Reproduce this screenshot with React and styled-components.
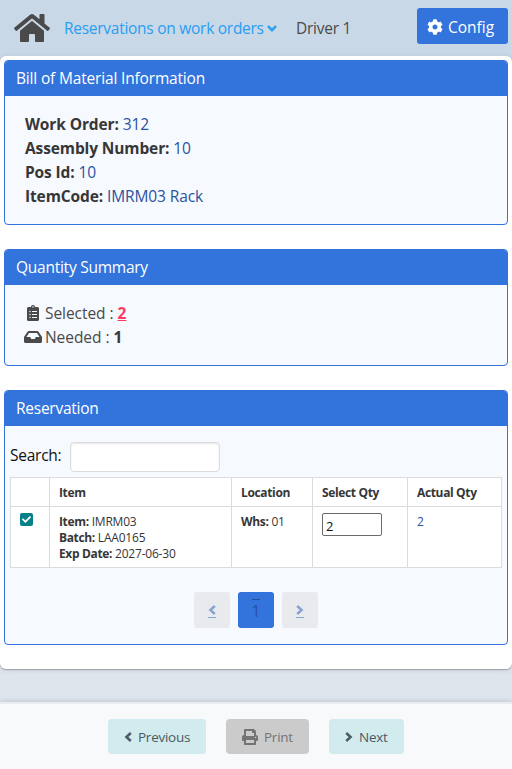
import React from "react";
import styled, { createGlobalStyle } from "styled-components";
import {
  FaHome,
  FaCog,
  FaClipboardList,
  FaInbox,
  FaPrint,
  FaCheck,
} from "react-icons/fa";

const GlobalStyle = createGlobalStyle`
  *, *::before, *::after { box-sizing: border-box; }
  body {
    margin: 0;
    background: #dee5ed;
    color: #4a4a4a;
    font-family: "Open Sans", "Noto Sans", sans-serif;
    font-size: 15.5px;
    line-height: 24px;
    overflow: hidden;
  }
  svg { display: block; flex: none; }
`;

const Page = styled.div`
  display: flex;
  flex-direction: column;
  width: 512px;
  height: 769px;
  background: linear-gradient(#c9d8e6 0 640px, #dee5ed 640px);
`;

const TopBar = styled.header`
  display: flex;
  align-items: center;
  height: 56px;
  flex: none;
  padding: 0 4px 0 14px;
  background: #c9d8e6;
  white-space: nowrap;
`;

const MenuLink = styled.a`
  display: flex;
  align-items: center;
  gap: 3px;
  width: 213px;
  margin-left: 14px;
  color: #2a9df4;
  letter-spacing: -0.27px;
`;

const Driver = styled.span`
  margin-left: 19px;
  letter-spacing: -0.25px;
`;

const ConfigButton = styled.button`
  display: flex;
  align-items: center;
  gap: 5px;
  width: 91px;
  height: 36px;
  margin: 0 0 4px auto;
  padding: 1px 0 0 10px;
  border: 0;
  border-radius: 3px;
  background: #3273dc;
  color: #fff;
  font: inherit;
`;

const Sheet = styled.main`
  display: flex;
  flex-direction: column;
  gap: 24px;
  flex: none;
  height: 613px;
  padding: 4px;
  border-radius: 6px;
  background: #fff;
  box-shadow: 0 1px 1px rgba(10, 10, 10, 0.25), 0 1px 5px rgba(10, 10, 10, 0.12);
`;

const Card = styled.section`
  flex: none;
  height: ${(p) => p.$height};
  border: 1px solid #3273dc;
  border-radius: 4px;
  background: #f6f9fe;
  overflow: hidden;
`;

const CardTitle = styled.h2`
  height: 35px;
  margin: 0;
  padding: 5px 11px;
  background: #3273dc;
  color: #fff;
  font-size: inherit;
  font-weight: 400;
  letter-spacing: ${(p) => p.$spacing || "-0.25px"};
`;

const InfoList = styled.div`
  padding: 16px 20px;
`;

const InfoLine = styled.div`
  color: #2a52a0;
  letter-spacing: -0.1px;
`;

const Strong = styled.strong`
  color: #363636;
  font-weight: 700;
  letter-spacing: ${(p) => p.$spacing || "-0.12px"};
`;

const SummaryLine = styled.div`
  display: flex;
  align-items: center;
  letter-spacing: -0.05px;
`;

const IconSlot = styled.span`
  display: flex;
  justify-content: center;
  width: 18px;
  margin: 0 3px 0 -1px;
`;

const Count = styled.strong`
  margin-left: 4px;
  color: ${(p) => (p.$alert ? "#ff3860" : "#363636")};
  text-decoration: ${(p) => (p.$alert ? "underline" : "none")};
`;

const ReservationBody = styled.div`
  padding: 16px 5px 0;
`;

const SearchRow = styled.label`
  display: flex;
  align-items: center;
  width: 210px;
  height: 30px;
  color: #111;
  letter-spacing: -0.25px;
`;

const SearchLabel = styled.span`
  margin-bottom: 5px;
`;

const SearchInput = styled.input`
  width: 150px;
  height: 30px;
  margin-left: auto;
  border: 1px solid #dbdbdb;
  border-radius: 4px;
  background: #fff;
  box-shadow: inset 0 1px 2px rgba(10, 10, 10, 0.1);
`;

const Table = styled.table`
  width: 492px;
  margin-top: 5px;
  border-collapse: collapse;
  table-layout: fixed;
  background: #fff;
  color: #363636;
  font-size: 12px;
  line-height: 16px;
`;

const Col = styled.col`
  width: ${(p) => p.$width};
`;

const HeadCell = styled.th`
  height: 29px;
  padding: 2px 9px 0;
  border: 1px solid #dbdbdb;
  font-weight: 700;
  text-align: left;
  white-space: nowrap;
  letter-spacing: -0.35px;
`;

const Cell = styled.td`
  height: 61px;
  padding: 7px 8px 0;
  padding-left: 9px;
  border: 1px solid #dbdbdb;
  vertical-align: top;
  white-space: nowrap;
  color: ${(p) => (p.$accent ? "#2a52a0" : "inherit")};
  letter-spacing: -0.2px;
`;

const Checkbox = styled.span`
  display: flex;
  align-items: center;
  justify-content: center;
  width: 13px;
  height: 13px;
  margin-top: -1px;
  border-radius: 2px;
  background: #078088;
  color: #fff;
`;

const QtyInput = styled.input`
  display: block;
  width: 60px;
  height: 23px;
  margin-top: -1px;
  padding: 2px 3px 0;
  border: 1px solid #6b6b6b;
  border-radius: 2px;
  background: #fff;
  color: #111;
  font: 13px "Open Sans", sans-serif;
`;

const Pagination = styled.nav`
  display: flex;
  justify-content: center;
  gap: 8px;
  margin-top: 24px;
`;

const PageButton = styled.a`
  display: flex;
  align-items: center;
  justify-content: center;
  width: 36px;
  height: 36px;
  border-radius: 3px;
  background: ${(p) => (p.$current ? "#3273dc" : "#e8eaee")};
  color: ${(p) => (p.$current ? "#28509c" : "#8ba2d0")};
`;

const PageMark = styled.span`
  display: flex;
  align-items: center;
  justify-content: center;
  width: 8px;
  height: ${(p) => (p.$over ? "22px" : "14px")};
  padding-bottom: ${(p) => (p.$over ? "0" : "2px")};
  margin-top: ${(p) => (p.$over ? "0" : "2px")};
  border: 0 solid currentColor;
  border-top-width: ${(p) => (p.$over ? "1px" : "0")};
  border-bottom-width: ${(p) => (p.$over ? "0" : "1px")};
`;

const Footer = styled.footer`
  display: flex;
  justify-content: center;
  gap: 20px;
  flex: none;
  height: 67px;
  margin-top: auto;
  padding-top: 15px;
  border-top: 2px solid #e9edf1;
  background: #f8f9fb;
  box-shadow: 0 -1px 5px rgba(10, 10, 10, 0.14);
`;

const FooterButton = styled.button`
  display: flex;
  align-items: center;
  width: ${(p) => p.$width};
  height: 35px;
  gap: 6px;
  padding: 1px 0 0 16px;
  border: 0;
  border-radius: 4px;
  background: ${(p) => (p.$disabled ? "#cbcbcb" : "#d1ebef")};
  color: ${(p) => (p.$disabled ? "#747474" : "#4d5963")};
  font-family: inherit;
  font-size: 13.5px;
  letter-spacing: -0.25px;
`;

const ChevronSvg = styled.svg`
  fill: none;
  stroke: currentColor;
  stroke-width: 2.5px;
`;

const chevrons = {
  left: { width: 8, height: 10, d: "M6.8 1 2.4 5l4.4 4" },
  right: { width: 8, height: 10, d: "M1.2 1 5.6 5 1.2 9" },
  down: { width: 10, height: 7, d: "M1 1.2 5 5.2l4-4" },
};

function Chevron({ direction }) {
  const { width, height, d } = chevrons[direction];
  return (
    <ChevronSvg width={width} height={height} viewBox={`0 0 ${width} ${height}`}>
      <path d={d} />
    </ChevronSvg>
  );
}

const details = [
  { label: "Work Order:", value: "312" },
  { label: "Assembly Number:", value: "10" },
  { label: "Pos Id:", value: "10" },
  { label: "ItemCode:", value: "IMRM03 Rack" },
];

export default function App() {
  return (
    <Page>
      <GlobalStyle />
      <TopBar>
        <FaHome size={36} color="#4a4a4a" />
        <MenuLink>
          Reservations on work orders
          <Chevron direction="down" />
        </MenuLink>
        <Driver>Driver 1</Driver>
        <ConfigButton>
          <FaCog size={16} />
          Config
        </ConfigButton>
      </TopBar>

      <Sheet>
        <Card $height="165px">
          <CardTitle $spacing="-0.17px">Bill of Material Information</CardTitle>
          <InfoList>
            {details.map((d) => (
              <InfoLine key={d.label}>
                <Strong>{d.label}</Strong> {d.value}
              </InfoLine>
            ))}
          </InfoList>
        </Card>

        <Card $height="117px">
          <CardTitle>Quantity Summary</CardTitle>
          <InfoList>
            <SummaryLine>
              <IconSlot><FaClipboardList size={16} /></IconSlot>
              Selected : <Count $alert>2</Count>
            </SummaryLine>
            <SummaryLine>
              <IconSlot><FaInbox size={18} /></IconSlot>
              Needed : <Count>1</Count>
            </SummaryLine>
          </InfoList>
        </Card>

        <Card $height="255px">
          <CardTitle>Reservation</CardTitle>
          <ReservationBody>
            <SearchRow>
              <SearchLabel>Search:</SearchLabel>
              <SearchInput type="text" />
            </SearchRow>
            <Table>
              <colgroup>
                <Col $width="39px" />
                <Col $width="182px" />
                <Col $width="81px" />
                <Col $width="95px" />
                <Col $width="94px" />
              </colgroup>
              <thead>
                <tr>
                  <HeadCell />
                  <HeadCell>Item</HeadCell>
                  <HeadCell>Location</HeadCell>
                  <HeadCell>Select Qty</HeadCell>
                  <HeadCell>Actual Qty</HeadCell>
                </tr>
              </thead>
              <tbody>
                <tr>
                  <Cell><Checkbox><FaCheck size={9} /></Checkbox></Cell>
                  <Cell>
                    <div><Strong $spacing="-0.35px">Item:</Strong> IMRM03</div>
                    <div><Strong $spacing="-0.35px">Batch:</Strong> LAA0165</div>
                    <div><Strong $spacing="-0.35px">Exp Date:</Strong> 2027-06-30</div>
                  </Cell>
                  <Cell><Strong $spacing="-0.35px">Whs:</Strong> 01</Cell>
                  <Cell><QtyInput defaultValue="2" /></Cell>
                  <Cell $accent>2</Cell>
                </tr>
              </tbody>
            </Table>
            <Pagination>
              <PageButton><PageMark><Chevron direction="left" /></PageMark></PageButton>
              <PageButton $current><PageMark $over>1</PageMark></PageButton>
              <PageButton><PageMark><Chevron direction="right" /></PageMark></PageButton>
            </Pagination>
          </ReservationBody>
        </Card>
      </Sheet>

      <Footer>
        <FooterButton $width="98px"><Chevron direction="left" />Previous</FooterButton>
        <FooterButton $width="83px" $disabled><FaPrint size={16} />Print</FooterButton>
        <FooterButton $width="75px"><Chevron direction="right" />Next</FooterButton>
      </Footer>
    </Page>
  );
}
